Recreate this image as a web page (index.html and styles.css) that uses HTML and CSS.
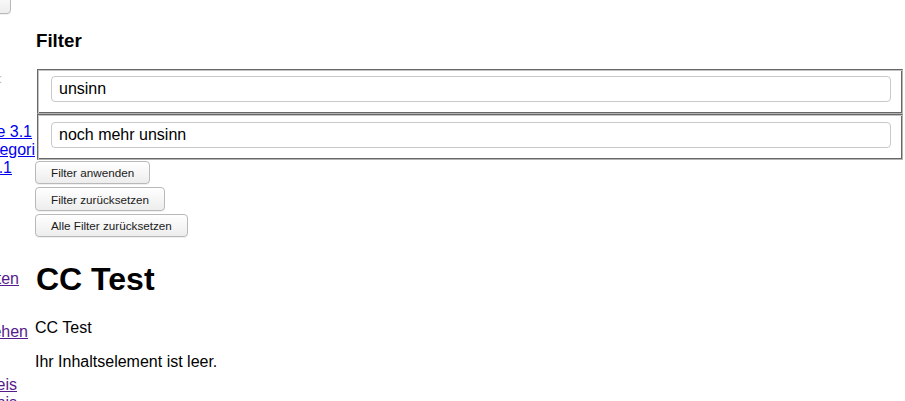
FILE: index.html
```html
<!DOCTYPE html>
<html lang="de">
<head>
<meta charset="utf-8">
<title>CC Test</title>
<link rel="stylesheet" href="styles.css">
</head>
<body>
<div class="page">
  <aside class="sidebar">
    <div class="side-row side-btn-row"><button class="btn side-btn" type="button">Suchen</button></div>
    <div class="side-row side-label"><span>Suche:</span></div>
    <div class="side-links first">
      <div class="side-row pr4"><a href="#" class="link">Unterseite 3.1</a></div>
      <div class="side-row pr1"><a href="#" class="link">Unterkategori</a></div>
      <div class="side-row pr24"><a href="#" class="link">3.1</a></div>
    </div>
    <div class="side-row pr16 gap-a"><a href="#" class="link visited">Inhalten</a></div>
    <div class="side-row pr8 gap-b"><a href="#" class="link visited">Ansehen</a></div>
    <div class="side-links gap-b">
      <div class="side-row pr18"><a href="#" class="link visited">Hinweis</a></div>
      <div class="side-row pr18"><a href="#" class="link visited">Ergebnis</a></div>
    </div>
  </aside>
  <main class="main">
    <h3 class="filter-title">Filter</h3>
    <fieldset class="filter-set">
      <input class="filter-input" type="text" value="unsinn">
    </fieldset>
    <fieldset class="filter-set">
      <input class="filter-input" type="text" value="noch mehr unsinn">
    </fieldset>
    <div class="btn-group">
      <button class="btn" type="button">Filter anwenden</button>
      <button class="btn" type="button">Filter zurücksetzen</button>
      <button class="btn" type="button">Alle Filter zurücksetzen</button>
    </div>
    <h1 class="page-title">CC Test</h1>
    <p class="text">CC Test</p>
    <p class="text">Ihr Inhaltselement ist leer.</p>
  </main>
</div>
</body>
</html>
```

FILE: styles.css
```css
html, body {
  margin: 0;
  padding: 0;
  background: #fff;
}
body {
  font-family: "Liberation Sans", Arial, Helvetica, sans-serif;
  font-size: 16px;
  color: #000;
  overflow: hidden;
}
.page {
  display: flex;
  width: 905px;
  height: 401px;
  overflow: hidden;
}
.sidebar {
  width: 35px;
  flex: 0 0 35px;
  overflow: hidden;
  display: flex;
  flex-direction: column;
}
.side-row {
  display: flex;
  justify-content: flex-end;
  white-space: nowrap;
}
.side-btn-row {
  margin-top: -10px;
  padding-right: 24px;
}
.side-btn {
  height: 24px;
}
.side-label {
  margin-top: 58px;
  padding-right: 33px;
  font-size: 12px;
  line-height: 15px;
  color: #b5b5b5;
}
.side-links.first {
  margin-top: 36px;
}
.gap-a { margin-top: 93px; }
.gap-b { margin-top: 35px; }
.pr1 { padding-right: 0; }
.pr4 { padding-right: 3px; }
.pr8 { padding-right: 7px; }
.pr16 { padding-right: 16px; }
.pr18 { padding-right: 18px; }
.pr24 { padding-right: 23px; }
.link {
  color: #0000ee;
  text-decoration: underline;
}
.link.visited {
  color: #551a8b;
}
.main {
  flex: 1 1 auto;
  min-width: 0;
  padding-top: 11px;
}
.filter-title {
  font-size: 18.72px;
  font-weight: bold;
  margin: 18.72px 0 17px 1px;
}
.filter-set {
  margin: 0 2px;
  padding: 6.6px 13px 11px 13px;
  border-style: solid;
  border-width: 1px;
  border-color: #676767 #b4b4b4 #b4b4b4 #676767;
  box-shadow: inset 1px 1px 0 #c4c4c4, inset -1px -1px 0 #676767;
  min-width: 0;
}
.filter-input {
  display: block;
  box-sizing: border-box;
  width: calc(100% + 2px);
  margin-left: 0;
  height: 26px;
  padding: 2px 7px;
  border: 1px solid #c9c9c9;
  border-radius: 4px;
  font-family: "Liberation Sans", Arial, Helvetica, sans-serif;
  font-size: 16px;
  color: #000;
  background: #fff;
  outline: none;
}
.btn-group {
  display: flex;
  flex-direction: column;
  align-items: flex-start;
  gap: 3px;
  margin-top: 1px;
  padding-bottom: 2px;
}
.btn {
  box-sizing: border-box;
  height: 23.5px;
  padding: 0 15px;
  border: 1px solid #b9b9b9;
  border-radius: 4px;
  background: linear-gradient(#ffffff, #ededed);
  font-family: "Liberation Sans", Arial, Helvetica, sans-serif;
  font-size: 11.7px;
  color: #1a1a1a;
  white-space: nowrap;
  box-shadow: 0 1px 0 rgba(0, 0, 0, 0.06);
}
.page-title {
  font-size: 32px;
  font-weight: bold;
  margin: 21.44px 0 21.44px 1px;
}
.text {
  margin: 16px 0 16px 0;
}
```
